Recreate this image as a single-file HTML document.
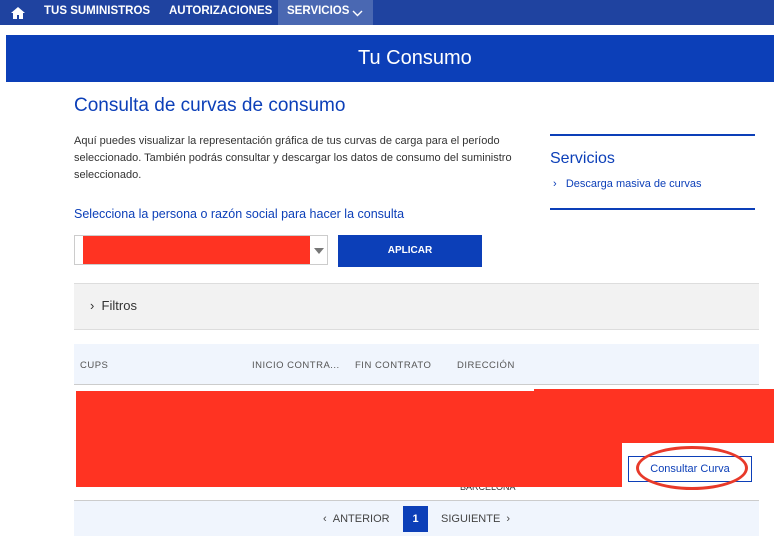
<!DOCTYPE html>
<html><head><meta charset="utf-8"><style>
body{margin:0;width:774px;height:535px;position:relative;background:#fff;font-family:"Liberation Sans",sans-serif;overflow:hidden}
.a{position:absolute}
.nav{left:0;top:0;width:774px;height:25px;background:#1f43a0;color:#fff;font-size:11.5px;font-weight:bold}
.nav span{position:absolute;top:5px}
</style></head><body>
<div class="a nav">
<svg class="a" style="left:11px;top:7px" width="14" height="12" viewBox="0 0 14 12"><path d="M7 0L0 6h2v6h4V8h2v4h4V6h2z" fill="#fff"/></svg>
<span style="left:44px">TUS SUMINISTROS</span>
<span style="left:169px">AUTORIZACIONES</span>
<div class="a" style="left:278px;top:0;width:95px;height:25px;background:#4a68b2"></div>
<span style="left:287px">SERVICIOS</span>
<svg class="a" style="left:352px;top:10px" width="11" height="7"><path d="M1 1l4.5 4.5L10 1" stroke="#fff" stroke-width="1.4" fill="none"/></svg>
</div>
<div class="a" style="left:6px;top:35px;width:768px;height:47px;background:#0c3fb8"></div>
<div class="a" style="left:358px;top:35px;color:#fff;font-size:20px;line-height:47px">Tu Consumo</div>
<div class="a" style="left:74px;top:95px;color:#0c3fb8;font-size:19px">Consulta de curvas de consumo</div>
<div class="a" style="left:74px;top:133px;width:445px;font-size:11px;line-height:17px;color:#333">Aquí puedes visualizar la representación gráfica de tus curvas de carga para el período seleccionado. También podrás consultar y descargar los datos de consumo del suministro seleccionado.</div>
<div class="a" style="left:550px;top:134px;width:205px;height:2px;background:#0c3fb8"></div>
<div class="a" style="left:550px;top:150px;color:#0c3fb8;font-size:16px">Servicios</div>
<div class="a" style="left:553px;top:178px;color:#0c3fb8;font-size:11px">›&nbsp;&nbsp;&nbsp;Descarga masiva de curvas</div>
<div class="a" style="left:550px;top:208px;width:205px;height:2px;background:#0c3fb8"></div>
<div class="a" style="left:74px;top:207px;color:#0c3fb8;font-size:12.5px">Selecciona la persona o razón social para hacer la consulta</div>
<div class="a" style="left:74px;top:235px;width:254px;height:30px;border:1px solid #ccc;box-sizing:border-box"></div>
<div class="a" style="left:83px;top:236px;width:227px;height:28px;background:#ff3322"></div>
<div class="a" style="left:314px;top:248px;border:5px solid transparent;border-top:6px solid #777"></div>
<div class="a" style="left:338px;top:235px;width:144px;height:32px;background:#0c3fb8;color:#fff;font-size:10px;font-weight:bold;text-align:center;line-height:32px">APLICAR</div>
<div class="a" style="left:74px;top:283px;width:685px;height:45px;background:#f2f2f2;border-top:1px solid #ddd;border-bottom:1px solid #ddd"></div>
<div class="a" style="left:90px;top:298px;font-size:13px;color:#333">›&nbsp;&nbsp;Filtros</div>
<div class="a" style="left:74px;top:344px;width:685px;height:40px;background:#f0f5fd;border-bottom:1px solid #ccc"></div>
<div class="a" style="left:80px;top:360px;font-size:9.5px;color:#555;letter-spacing:.5px">CUPS</div>
<div class="a" style="left:252px;top:360px;font-size:9.5px;color:#555;letter-spacing:.5px">INICIO CONTRA...</div>
<div class="a" style="left:355px;top:360px;font-size:9.5px;color:#555;letter-spacing:.5px">FIN CONTRATO</div>
<div class="a" style="left:457px;top:360px;font-size:9.5px;color:#555;letter-spacing:.5px">DIRECCIÓN</div>
<div class="a" style="left:74px;top:500px;width:685px;height:35px;background:#f0f5fd;border-top:1px solid #ccc"></div>
<div class="a" style="left:460px;top:482px;font-size:9px;color:#333">BARCELONA</div>
<div class="a" style="left:76px;top:391px;width:546px;height:96px;background:#ff3322"></div>
<div class="a" style="left:534px;top:389px;width:240px;height:54px;background:#ff3322"></div>
<div class="a" style="left:628px;top:456px;width:124px;height:26px;border:1px solid #0c3fb8;box-sizing:border-box;color:#0c3fb8;font-size:11px;text-align:center;line-height:24px">Consultar Curva</div>
<div class="a" style="left:636px;top:446px;width:112px;height:44px;border:3px solid #e83a2a;border-radius:50%;box-sizing:border-box"></div>
<div class="a" style="left:323px;top:513px;font-size:11px;color:#444">‹&nbsp;&nbsp;ANTERIOR</div>
<div class="a" style="left:403px;top:506px;width:25px;height:26px;background:#0c3fb8;color:#fff;font-size:11px;font-weight:bold;text-align:center;line-height:26px">1</div>
<div class="a" style="left:441px;top:513px;font-size:11px;color:#444">SIGUIENTE&nbsp;&nbsp;›</div>
</body></html>
